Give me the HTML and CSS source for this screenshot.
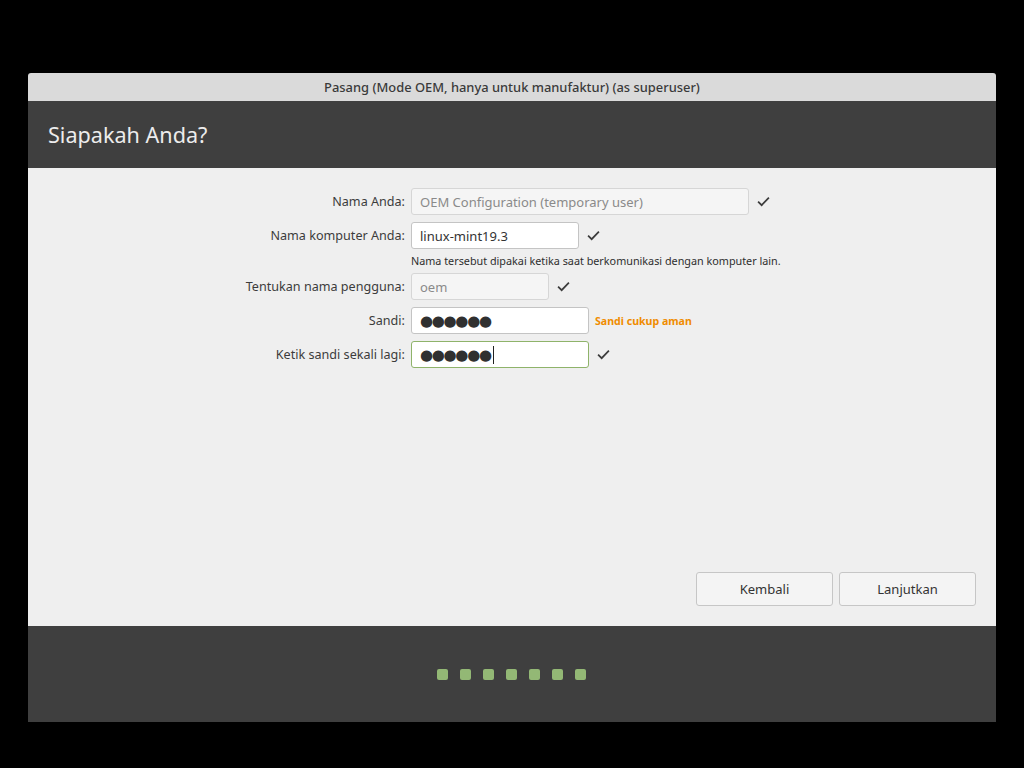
FILE: index.html
```html
<!DOCTYPE html>
<html lang="id">
  <head>
    <meta charset="UTF-8" />
    <title>Pasang</title>
    <link rel="stylesheet" href="styles.css">
  </head>
  <body>
    <div class="window">
      <div class="titlebar">Pasang (Mode OEM, hanya untuk manufaktur) (as superuser)</div>
      <div class="header">Siapakah Anda?</div>

      <div class="content">
        <div class="form">
          <label class="label">Nama Anda:</label>
          <div class="value">
            <div class="field disabled w-full">OEM Configuration (temporary user)</div>
            <span class="check"><svg viewBox="0 0 12 10" width="13" height="11"><path d="M1 5.2 L4.3 8.4 L11 1.5" fill="none" stroke="#3c3c3c" stroke-width="1.6"/></svg></span>
          </div>

          <label class="label">Nama komputer Anda:</label>
          <div class="value">
            <div class="field w-host">linux-mint19.3</div>
            <span class="check"><svg viewBox="0 0 12 10" width="13" height="11"><path d="M1 5.2 L4.3 8.4 L11 1.5" fill="none" stroke="#3c3c3c" stroke-width="1.6"/></svg></span>
          </div>
          <div></div>
          <div class="hint">Nama tersebut dipakai ketika saat berkomunikasi dengan komputer lain.</div>

          <label class="label">Tentukan nama pengguna:</label>
          <div class="value">
            <div class="field disabled w-user">oem</div>
            <span class="check"><svg viewBox="0 0 12 10" width="13" height="11"><path d="M1 5.2 L4.3 8.4 L11 1.5" fill="none" stroke="#3c3c3c" stroke-width="1.6"/></svg></span>
          </div>

          <label class="label">Sandi:</label>
          <div class="value">
            <div class="field w-pass"><span class="dots">●●●●●●</span></div>
            <span class="strength">Sandi cukup aman</span>
          </div>

          <label class="label">Ketik sandi sekali lagi:</label>
          <div class="value">
            <div class="field w-pass focused"><span class="dots">●●●●●●</span><span class="caret"></span></div>
            <span class="check"><svg viewBox="0 0 12 10" width="13" height="11"><path d="M1 5.2 L4.3 8.4 L11 1.5" fill="none" stroke="#3c3c3c" stroke-width="1.6"/></svg></span>
          </div>
        </div>

        <div class="buttons">
          <button>Kembali</button>
          <button>Lanjutkan</button>
        </div>
      </div>

      <div class="footer">
        <span class="step"></span>
        <span class="step"></span>
        <span class="step"></span>
        <span class="step"></span>
        <span class="step"></span>
        <span class="step"></span>
        <span class="step"></span>
      </div>
    </div>
  </body>
</html>
```

FILE: styles.css
```css
body {
  margin: 0;
  background-color: #000;
  font-family: "Noto Sans", "Open Sans", sans-serif;
  font-size: 12.6px;
  color: #3c3c3c;
}

.window {
  width: 968px;
  margin: 73px 0 0 28px;
  display: flex;
  flex-direction: column;
}

.titlebar {
  height: 28px;
  line-height: 28px;
  background-color: #dadada;
  border-radius: 3px 3px 0 0;
  text-align: center;
  font-weight: 500;
  font-size: 12.9px;
  color: #3a3a3a;
}

.header {
  height: 67px;
  background-color: #3f3f3f;
  color: #ececec;
  font-size: 21.6px;
  padding-left: 20px;
  display: flex;
  align-items: center;
}

.content {
  height: 458px;
  background-color: #efefef;
  display: flex;
  flex-direction: column;
  box-sizing: border-box;
  padding: 20px 20px 20px 0;
}

.form {
  display: grid;
  grid-template-columns: 377px 1fr;
  column-gap: 6px;
  row-gap: 7px;
  align-items: center;
}

.label {
  text-align: right;
  color: #3c3c3c;
}

.value {
  display: flex;
  align-items: center;
}

.field {
  height: 27px;
  box-sizing: border-box;
  border: 1px solid #c4c4c4;
  border-radius: 3px;
  background-color: #fff;
  padding: 0 8px;
  display: flex;
  align-items: center;
  color: #333;
  font-size: 13px;
}

.field.disabled {
  background-color: #f5f5f5;
  border-color: #d6d6d6;
  color: #8a8a8a;
}

.field.focused {
  border-color: #8fb36a;
}

.w-full { width: 338px; }
.w-host { width: 168px; }
.w-user { width: 138px; }
.w-pass { width: 178px; }

.dots {
  font-family: "DejaVu Sans", sans-serif;
  font-size: 15px;
  letter-spacing: -1.3px;
  color: #303030;
}

.caret {
  width: 1px;
  height: 18px;
  background-color: #222;
  margin-left: 2px;
}

.check {
  margin-left: 8px;
  display: flex;
}

.hint {
  font-size: 10.8px;
  color: #2e2e2e;
  margin-top: -3px;
  margin-bottom: -2px;
}

.strength {
  margin-left: 6px;
  font-size: 10.6px;
  font-weight: bold;
  color: #f08c00;
}

.buttons {
  margin-top: auto;
  display: flex;
  justify-content: flex-end;
  gap: 6px;
}

button {
  width: 137px;
  height: 34px;
  background-color: #f4f4f4;
  border: 1px solid #c6c6c6;
  border-radius: 3px;
  font-family: inherit;
  font-size: 13px;
  color: #333;
}

.footer {
  height: 96px;
  background-color: #3f3f3f;
  display: flex;
  justify-content: center;
  align-items: center;
  gap: 12px;
  padding-right: 2px;
}

.step {
  width: 11px;
  height: 11px;
  border-radius: 2px;
  background-color: #93b875;
}
```
